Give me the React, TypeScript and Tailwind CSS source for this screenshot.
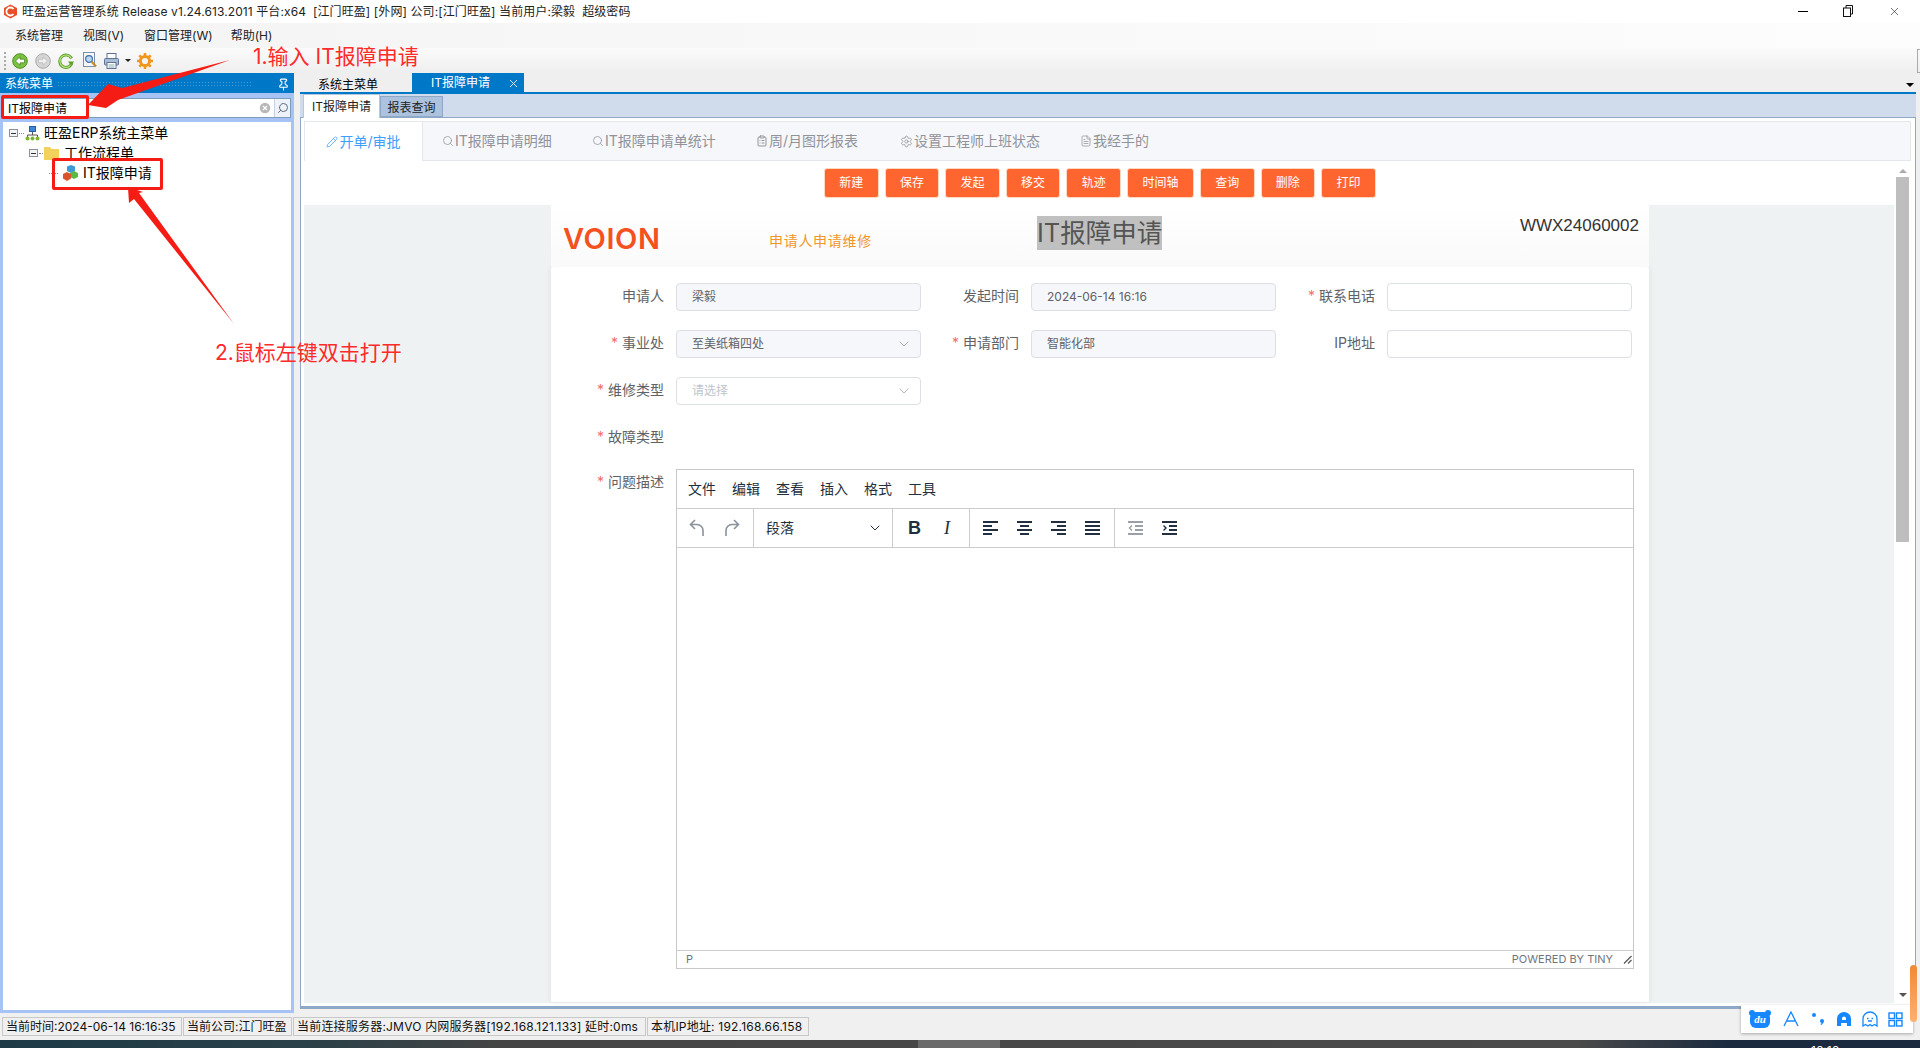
import { ChevronDown, CircleX, ClipboardList, FileText, Pencil, Pin, Search, Settings, X } from "lucide-react";
import type { ReactNode } from "react";

const CJK = "font-['Inter','Noto_Sans_CJK_SC',sans-serif]";

// toolbar icons of the old desktop shell
function RoundArrow({ grey, flip }: { grey?: boolean; flip?: boolean }) {
  return (
    <svg width="16" height="16" viewBox="0 0 16 16" className={flip ? "-scale-x-100" : ""}>
      <circle cx="8" cy="8" r="7.3" fill={grey ? "#d6d6d6" : "#7cc242"} stroke={grey ? "#a8a8a8" : "#4d8f22"} />
      <path d="M3.5 8 8 3.8V6.2h4.5v3.6H8v2.4z" fill={grey ? "#eeeeee" : "#ffffff"} stroke={grey ? "#b4b4b4" : "#3e7d1a"} strokeWidth="0.7" />
    </svg>
  );
}

function Refresh() {
  return (
    <svg width="16" height="16" viewBox="0 0 16 16">
      <path d="M13.5 5.500A6.200 6.200 0 1 0 14 9.500" fill="none" stroke="#5e9f2a" strokeWidth="3" />
      <path d="M13.5 5.500A6.200 6.200 0 1 0 14 9.500" fill="none" stroke="#b5e07f" strokeWidth="1.200" />
      <path d="M10 8.500h6l-3 4z" fill="#5e9f2a" />
    </svg>
  );
}

function Preview() {
  return (
    <svg width="15" height="17" viewBox="0 0 15 17">
      <rect x="0.5" y="0.5" width="11" height="14" fill="#f4f7fb" stroke="#7a8fb0" />
      <circle cx="6" cy="7" r="3.400" fill="#bcd7f5" stroke="#3f6fb0" strokeWidth="1.200" />
      <path d="m8.500 9.500 4.500 5" stroke="#c98a2b" strokeWidth="2.200" />
    </svg>
  );
}

function Printer() {
  return (
    <svg width="15" height="16" viewBox="0 0 15 16">
      <rect x="3" y="0.5" width="9" height="6" fill="#fff" stroke="#5d7396" />
      <rect x="0.5" y="5.500" width="14" height="6.500" rx="1" fill="#a9bcd6" stroke="#5d7396" />
      <rect x="3" y="9.500" width="9" height="6" fill="#fff" stroke="#5d7396" />
      <path d="M4.500 12h6M4.500 14h6" stroke="#8aa" />
    </svg>
  );
}

function Gear() {
  return (
    <svg width="16" height="16" viewBox="0 0 16 16">
      <circle cx="8" cy="8" r="4.600" fill="none" stroke="#f0971c" strokeWidth="3" />
      <path d="M8 0v3M8 13v3M0 8h3M13 8h3M2.300 2.300l2.200 2.200M11.500 11.500l2.200 2.200M13.700 2.300l-2.200 2.200M4.500 11.500l-2.200 2.200" stroke="#f0971c" strokeWidth="2.600" />
    </svg>
  );
}

function TreeBox() {
  return (
    <span className="flex h-[8px] w-[9px] shrink-0 items-center justify-center border border-[#8a9098] bg-[#f4f4f4]">
      <span className="h-px w-[5px] bg-[#30343a]" />
    </span>
  );
}

function OrgIcon() {
  return (
    <svg width="15" height="15" viewBox="0 0 15 15">
      <rect x="4.500" y="0.5" width="6" height="5" fill="#3f86d8" stroke="#2a5fa8" />
      <path d="M7.500 6v3M2.500 11V9h10v2" fill="none" stroke="#555" />
      <circle cx="2.500" cy="12.500" r="2" fill="#7fb52e" />
      <circle cx="7.500" cy="12.500" r="2" fill="#7fb52e" />
      <circle cx="12.500" cy="12.500" r="2" fill="#7fb52e" />
    </svg>
  );
}

function FolderIcon() {
  return (
    <svg width="15" height="14" viewBox="0 0 15 14">
      <path d="M0 1h6l1.500 2H15v11H0z" fill="#f2d25c" />
    </svg>
  );
}

function CubesIcon() {
  return (
    <svg width="16" height="16" viewBox="0 0 16 16">
      <path d="M5 1.500 9 0l4 1.500V6L9 8 5 6z" fill="#3c9bd6" />
      <path d="M8 8l4-2 4 2v4l-4 2-4-2z" fill="#58b947" />
      <path d="M1 9l4-2 4 2v4.500L5 16l-4-2.500z" fill="#d9552b" />
    </svg>
  );
}

function Field({ label, required, width }: { label: string; required?: boolean; width: string }) {
  return (
    <label className={`${width} shrink-0 pr-3 text-right text-sm leading-[26px] text-[#606266]`}>
      {required && <span className="mr-1 text-[#f56c6c]">*</span>}
      {label}
    </label>
  );
}

function Input({ value, disabled, placeholder, select }: { value?: string; disabled?: boolean; placeholder?: boolean; select?: boolean }) {
  return (
    <div
      className={`flex h-7 w-[245px] shrink-0 items-center justify-between rounded-[4px] border border-[#dcdfe6] pl-[15px] pr-[8px] text-xs ${disabled ? "bg-[#f5f7fa] text-[#606266]" : "bg-white"} ${placeholder ? "text-[#c0c4cc]" : ""}`}
    >
      <span>{value}</span>
      {select && <ChevronDown size={16} strokeWidth={1} className="text-[#909399]" />}
    </div>
  );
}

function EditorBars({ kind }: { kind: "left" | "center" | "right" | "justify" }) {
  const d = {
    left: "M0 1h15M0 5h9M0 9h15M0 13h9",
    center: "M0 1h15M3 5h9M0 9h15M3 13h9",
    right: "M0 1h15M6 5h9M0 9h15M6 13h9",
    justify: "M0 1h15M0 5h15M0 9h15M0 13h15",
  }[kind];
  return (
    <svg width="15" height="14" viewBox="0 0 15 14">
      <path d={d} stroke="#222f3e" strokeWidth="2" />
    </svg>
  );
}

const tabs: { label: string; w: string; icon: ReactNode }[] = [
  { label: "IT报障申请明细", w: "w-[110px]", icon: <Search size={12} strokeWidth={1.5} /> },
  { label: "IT报障申请单统计", w: "w-[124px]", icon: <Search size={12} strokeWidth={1.5} /> },
  { label: "周/月图形报表", w: "w-[104px]", icon: <ClipboardList size={12} strokeWidth={2} /> },
  { label: "设置工程师上班状态", w: "w-[140px]", icon: <Settings size={13} strokeWidth={1.5} /> },
  { label: "我经手的", w: "w-[70px]", icon: <FileText size={12} strokeWidth={1.5} /> },
];

const buttons = ["新建", "保存", "发起", "移交", "轨迹", "时间轴", "查询", "删除", "打印"];

export default function App() {
  return (
    <div className={`relative flex h-[1048px] w-[1920px] flex-col overflow-hidden bg-[#f0f0f0] ${CJK}`}>
      {/* 标题栏 */}
      <div className="flex h-[23px] shrink-0 items-center bg-white pl-[3px] pr-[19px]">
        <svg width="15" height="15" viewBox="0 0 15 15">
          <path d="M7.500 0.5 14 4v7l-6.500 3.500L1 11V4z" fill="#e8502a" />
          <path d="M10.500 5a4 4 0 1 0 0 5" fill="none" stroke="#fff" strokeWidth="1.800" />
        </svg>
        <span className="ml-1 whitespace-pre text-xs tracking-[0.1px] text-[#222]">
          旺盈运营管理系统 Release v1.24.613.2011 平台:x64  [江门旺盈] [外网] 公司:[江门旺盈] 当前用户:梁毅  超级密码
        </span>
        <div className="ml-auto flex items-center gap-[35px]">
          <span className="h-px w-[10px] bg-black" />
          <svg width="10" height="12" viewBox="0 0 10 12" className="-mt-[2px]">
            <rect x="0.5" y="3" width="7" height="8.500" fill="#fff" stroke="#111" />
            <path d="M3 3V0.5h6.500V9H8" fill="none" stroke="#111" />
          </svg>
          <X size={13} strokeWidth={1} className="text-black" />
        </div>
      </div>

      {/* 菜单栏 */}
      <div className="flex h-[25px] shrink-0 items-center bg-gradient-to-r from-[#f4f4f4] to-[#fdfdfd] pl-[15px] text-xs text-[#222]">
        <span>系统管理</span>
        <span className="ml-5">视图(V)</span>
        <span className="ml-5">窗口管理(W)</span>
        <span className="ml-[18px]">帮助(H)</span>
      </div>

      {/* 工具栏 */}
      <div className="flex h-[25px] shrink-0 items-center bg-gradient-to-b from-[#fbfbfb] to-[#eeeeee] pl-[4px]">
        <span className="mr-[6px] h-[18px] w-[2px] border-l-2 border-dotted border-[#aaa]" />
        <RoundArrow />
        <span className="ml-[7px]"><RoundArrow grey flip /></span>
        <span className="ml-[7px]"><Refresh /></span>
        <span className="ml-[9px]"><Preview /></span>
        <span className="ml-[6px]"><Printer /></span>
        <span className="ml-[6px] h-0 w-0 border-x-[3px] border-t-[3px] border-x-transparent border-t-[#222]" />
        <span className="ml-[6px]"><Gear /></span>
        <span className="ml-auto h-[24px] w-[3px] border-y border-l border-[#aaaaaa]" />
      </div>

      <div className="flex min-h-0 flex-1">
        {/* 左侧系统菜单 */}
        <aside className="flex h-[940px] w-[294px] shrink-0 flex-col">
          <div className="flex h-5 shrink-0 items-center bg-[#0078c8] pl-[5px] pr-[4px] pt-[2px] text-xs text-white">
            <span>系统菜单</span>
            <span className="ml-1 h-[6px] flex-1 bg-[radial-gradient(#4a9bd8_1px,transparent_1px)] bg-[length:3px_3px]" />
            <Pin size={13} className="ml-[25px] text-white" />
          </div>
          <div className="flex min-h-0 flex-1 flex-col border-x-[3px] border-b-[3px] border-[#a6c3f5] bg-white">
            <div className="-mx-[3px] flex h-[29px] shrink-0 items-start bg-[#a6c3f5] px-[3px] pt-[5px]">
              <div className="flex h-[20px] flex-1 items-center justify-between border border-[#7f9db9] bg-white pl-[4px]">
                <span className="pt-[2px] text-xs text-black">IT报障申请</span>
                <div className="flex h-full items-center">
                  <CircleX size={14} className="mr-[2px] fill-[#b8b8b8] text-white" />
                  <span className="flex h-full w-[16px] items-center justify-center border-l border-[#c6d3e6] bg-[#eef3fa]">
                    <Search size={12} className="-scale-x-100 text-[#5a6b80]" />
                  </span>
                </div>
              </div>
            </div>
            <div className="flex flex-col pt-[1px] text-sm leading-[20px] text-black">
              <div className="flex h-[20px] items-center pl-[6px]">
                <TreeBox />
                <span className="ml-[1px] w-[5px] border-t border-dotted border-[#888]" />
                <span className="ml-[1px]"><OrgIcon /></span>
                <span className="ml-[4px]">旺盈ERP系统主菜单</span>
              </div>
              <div className="flex h-[20px] items-center pl-[26px]">
                <TreeBox />
                <span className="ml-[1px] w-[4px] border-t border-dotted border-[#888]" />
                <span className="ml-[1px]"><FolderIcon /></span>
                <span className="ml-[5px]">工作流程单</span>
              </div>
              <div className="flex h-[20px] items-center pl-[46px]">
                <span className="w-[9px] border-t border-dotted border-[#888]" />
                <span className="ml-[4px]"><CubesIcon /></span>
                <span className="ml-[5px]">IT报障申请</span>
              </div>
            </div>
          </div>
        </aside>

        {/* 右侧工作区 */}
        <main className="ml-[6px] flex h-[936px] min-w-0 flex-1 flex-col pr-[4px]">
          <div className="relative flex h-[19px] shrink-0 bg-[#efefef] text-xs">
            <span className="ml-[18px] w-[94px] pt-[2px] leading-[19px] text-black">系统主菜单</span>
            <div className="flex w-[112px] items-center bg-[#0078c8] pl-[19px] pt-[1px] text-white">
              <span>IT报障申请</span>
              <X size={13} strokeWidth={1.5} className="ml-[17px]" />
            </div>
            <span className="absolute right-[2px] top-[10px] h-0 w-0 border-x-[4px] border-t-[4px] border-x-transparent border-t-black" />
          </div>
          <div className="h-[2px] shrink-0 bg-[#0078c8]" />
          <div className="flex h-[24px] shrink-0 items-end border-b border-[#8ea8c8] bg-[#d0dcec] pl-[3px] text-xs">
            <span className="relative z-10 -mb-px flex h-[24px] w-[77px] items-center justify-center border border-b-0 border-[#b8c8dc] bg-white pt-[1px] text-[#222]">IT报障申请</span>
            <span className="flex h-[21px] w-[63px] items-center justify-center border border-[#8ea8c8] bg-[#adc2dd] pt-[2px] text-[#222]">报表查询</span>
          </div>

          <div className="flex min-h-0 flex-1 flex-col border-x border-b-[3px] border-[#8ea8c8] bg-white p-[3px] pr-[4px]">
            {/* 页签 */}
            <div className="flex h-[40px] shrink-0 border border-[#e4e7ed] bg-[#f5f7fa] text-sm text-[#909399]">
              <div className="-mb-px flex w-[118px] items-center justify-center gap-[1px] border-r border-[#e4e7ed] bg-white text-[#409eff]">
                <Pencil size={12} strokeWidth={1.5} />
                <span>开单/审批</span>
              </div>
              <div className="ml-[19px] flex items-center gap-10">
                {tabs.map((t) => (
                  <span key={t.label} className={`${t.w} flex items-center gap-[1px] whitespace-nowrap`}>
                    {t.icon}
                    {t.label}
                  </span>
                ))}
              </div>
            </div>

            <div className="flex min-h-0 flex-1">
              <div className="flex min-w-0 flex-1 flex-col">
                {/* 操作按钮 */}
                <div className="flex h-[44px] shrink-0 items-start gap-[6px] bg-white pl-[520px] pt-[7px]">
                  {buttons.map((b) => (
                    <button
                      key={b}
                      className={`h-[30px] ${b === "时间轴" ? "w-[67px]" : "w-[54.6px]"} rounded-[3px] border border-[#ffd8c0] bg-[#ff652f] text-xs text-white`}
                    >
                      {b}
                    </button>
                  ))}
                </div>

                <div className="flex min-h-0 flex-1 bg-[#eff2f3] pb-[1px] pl-[247px]">
                  <div className="flex h-full w-[1098px] flex-col">
                    {/* 表头 */}
                    <div className="relative flex h-[62px] shrink-0 items-start bg-gradient-to-b from-white to-[#fafafa]">
                      <span className="ml-[12px] mt-[19px] font-['Inter',sans-serif] text-[29px] font-semibold leading-[30px] tracking-[0.6px] text-[#f4511e]">VOION</span>
                      <span className="absolute left-[218px] top-[26px] text-sm tracking-[0.7px] text-[#f0962a]">申请人申请维修</span>
                      <span className="absolute left-[486px] top-[11px] bg-[#c0c0c0] text-[25.5px] leading-[34px] text-[#555]">IT报障申请</span>
                      <span className="absolute right-[10px] top-[9px] font-['Liberation_Sans',sans-serif] text-[17px] leading-[24px] text-[#333]">WWX24060002</span>
                    </div>

                    {/* 表单 */}
                    <div className="flex min-h-0 flex-1 flex-col rounded-t-[2px] bg-white pt-[16px] shadow-[0_0_6px_rgba(0,0,0,0.08)]">
                      <div className="flex">
                        <Field label="申请人" width="w-[125px]" />
                        <Input value="梁毅" disabled />
                        <Field label="发起时间" width="w-[110px]" />
                        <Input value="2024-06-14 16:16" disabled />
                        <Field label="联系电话" required width="w-[111px]" />
                        <Input />
                      </div>
                      <div className="mt-[19px] flex">
                        <Field label="事业处" required width="w-[125px]" />
                        <Input value="至美纸箱四处" disabled select />
                        <Field label="申请部门" required width="w-[110px]" />
                        <Input value="智能化部" disabled />
                        <Field label="IP地址" width="w-[111px]" />
                        <Input />
                      </div>
                      <div className="mt-[19px] flex">
                        <Field label="维修类型" required width="w-[125px]" />
                        <Input value="请选择" placeholder select />
                      </div>
                      <div className="mt-[19px] flex h-[28px]">
                        <Field label="故障类型" required width="w-[125px]" />
                      </div>
                      <div className="mt-[17px] flex min-h-0 flex-1 pb-[33px]">
                        <Field label="问题描述" required width="w-[125px]" />
                        {/* 富文本编辑器 */}
                        <div className="flex w-[958px] flex-col border border-[#c8c8c8] bg-white text-[#222f3e]">
                          <div className="flex h-[39px] shrink-0 items-center gap-4 border-b border-[#cccccc] pl-[11px] text-sm">
                            <span>文件</span><span>编辑</span><span>查看</span><span>插入</span><span>格式</span><span>工具</span>
                          </div>
                          <div className="flex h-[39px] shrink-0 items-center border-b border-[#cccccc]">
                            <div className="flex h-full w-[77px] items-center gap-[19px] border-r border-[#cccccc] pl-[12px]">
                              <svg width="16" height="20" viewBox="0 0 16 20" fill="none" stroke="#8a929c" strokeWidth="1.600"><path d="M6 2 1.500 6.500 6 11M2 6.500h6a6 6 0 0 1 6 6V18" /></svg>
                              <svg width="16" height="20" viewBox="0 0 16 20" fill="none" stroke="#8a929c" strokeWidth="1.600"><path d="M10 2l4.500 4.500L10 11M14 6.500H8a6 6 0 0 0-6 6V18" /></svg>
                            </div>
                            <div className="flex h-full w-[139px] items-center justify-between border-r border-[#cccccc] pl-[12px] pr-[9px] text-sm">
                              <span>段落</span>
                              <ChevronDown size={16} strokeWidth={1.5} />
                            </div>
                            <div className="flex h-full w-[77px] items-center border-r border-[#cccccc] pl-[15px]">
                              <span className="w-[36px] font-['Liberation_Sans',sans-serif] text-lg font-bold">B</span>
                              <span className="font-['Liberation_Serif',serif] text-lg italic">I</span>
                            </div>
                            <div className="flex h-full w-[145px] items-center gap-[19px] border-r border-[#cccccc] pl-[13px]">
                              <EditorBars kind="left" />
                              <EditorBars kind="center" />
                              <EditorBars kind="right" />
                              <EditorBars kind="justify" />
                            </div>
                            <div className="flex items-center gap-[19px] pl-[13px]">
                              <svg width="15" height="14" viewBox="0 0 15 14" fill="none" stroke="#9aa0a8" strokeWidth="2"><path d="M0 1h15M7 5h8M7 9h8M0 13h15" /><path d="M4 4.500 1.500 7 4 9.500" strokeWidth="1.400" /></svg>
                              <svg width="15" height="14" viewBox="0 0 15 14" fill="none" stroke="#222f3e" strokeWidth="2"><path d="M0 1h15M7 5h8M7 9h8M0 13h15" /><path d="M1.500 4.500 4 7 1.500 9.500" strokeWidth="1.400" /></svg>
                            </div>
                          </div>
                          <div className="min-h-0 flex-1" />
                          <div className="flex h-[18px] shrink-0 items-center justify-between border-t border-[#cccccc] pl-[9px] pr-[1px] text-[11px] leading-none text-[#70757c]">
                            <span>P</span>
                            <div className="flex items-center gap-[10px]">
                              <span>POWERED BY TINY</span>
                              <svg width="9" height="9" viewBox="0 0 9 9" stroke="#555" strokeWidth="1.200"><path d="M1 8.500 8.500 1M5 8.500 8.500 5" /></svg>
                            </div>
                          </div>
                        </div>
                      </div>
                    </div>
                  </div>
                </div>
              </div>

              {/* 滚动条 */}
              <div className="flex w-[17px] shrink-0 flex-col items-center bg-white pb-[6px] pt-[8px]">
                <span className="h-0 w-0 border-x-[4px] border-b-[4px] border-x-transparent border-b-[#aaa]" />
                <span className="mt-[4px] h-[365px] w-[13px] bg-[#bebebe]" />
                <span className="mt-auto h-0 w-0 border-x-[4px] border-t-[4px] border-x-transparent border-t-[#555]" />
              </div>
            </div>
          </div>
        </main>
      </div>

      {/* 状态栏 */}
      <div className="flex h-[23px] shrink-0 items-start gap-[1px] bg-[#f0f0f0] pl-[2px] text-xs text-[#111]">
        <span className="flex h-[19px] w-[180px] items-center border border-[#c8c8c8] pl-[3px]">当前时间:2024-06-14 16:16:35</span>
        <span className="flex h-[19px] w-[109px] items-center border border-[#c8c8c8] pl-[3px]">当前公司:江门旺盈</span>
        <span className="flex h-[19px] w-[353px] items-center whitespace-nowrap border border-[#c8c8c8] pl-[3px] tracking-[0.2px]">当前连接服务器:JMVO 内网服务器[192.168.121.133] 延时:0ms</span>
        <span className="flex h-[19px] w-[162px] items-center whitespace-nowrap border border-[#c8c8c8] pl-[3px] tracking-[0.2px]">本机IP地址: 192.168.66.158</span>
      </div>

      {/* 任务栏 */}
      <div className="relative h-[8px] shrink-0 overflow-hidden bg-[linear-gradient(to_right,#1d3a46_0%,#2a4048_16%,#444444_26%,#4a4a4a_82%,#1b2a3f_90%,#1b2a3f_100%)]">
        <span className="absolute left-[918px] top-0 h-full w-[82px] bg-[#6a6a6a]" />
        <span className="absolute left-[1811px] top-[5px] text-xs leading-none text-white">16:16</span>
      </div>

      {/* 输入法工具条 */}
      <div className="absolute left-[1741px] top-[1005px] flex h-[28px] w-[172px] items-center bg-white pl-[8px] shadow-[0_1px_3px_rgba(0,0,0,0.3)]">
        <span className="relative flex h-[18px] w-[22px] items-center justify-center">
          <svg className="absolute inset-0" width="22" height="18" viewBox="0 0 22 18">
            <circle cx="3" cy="3" r="3" fill="#1787ff" />
            <circle cx="19" cy="3" r="3" fill="#1787ff" />
            <rect x="1" y="2" width="20" height="16" rx="6" fill="#1787ff" />
          </svg>
          <span className="relative font-['Liberation_Serif',serif] text-[11px] font-bold italic leading-none text-white">du</span>
        </span>
        <svg className="ml-[12px]" width="16" height="16" viewBox="0 0 16 16" fill="none" stroke="#1787ff" strokeWidth="1.300"><path d="M1 15 8 1l7 14M4 10h8" /></svg>
        <svg className="ml-[11px]" width="16" height="16" viewBox="0 0 16 16" fill="#1787ff"><circle cx="4" cy="4" r="2" /><circle cx="12" cy="10" r="2" /><path d="M13.500 10c0 2-1 3.500-2.500 4l-.5-1c1-.5 1.500-1 1.500-2z" /></svg>
        <svg className="ml-[10px]" width="16" height="16" viewBox="0 0 16 16" fill="#1787ff"><path fillRule="evenodd" d="M1 15V8a7 7 0 0 1 14 0v7h-4v-3H5v3zM6 9h4V7.500a2 2 0 0 0-4 0z" /></svg>
        <svg className="ml-[10px]" width="16" height="16" viewBox="0 0 16 16" fill="none" stroke="#1787ff" strokeWidth="1.300"><path d="M1 15V8a7 7 0 0 1 14 0v7l-2.500-1.500L10 15l-2-1.500L6 15l-2.500-1.500z" /><path d="M5 7.500h1.500M9.500 7.500H11M6 10h4" /></svg>
        <svg className="ml-[10px]" width="15" height="15" viewBox="0 0 15 15" fill="none" stroke="#1787ff" strokeWidth="1.400"><rect x="1" y="1" width="5.500" height="5.500" /><rect x="8.500" y="1" width="5.500" height="5.500" /><rect x="1" y="8.500" width="5.500" height="5.500" /><rect x="8.500" y="8.500" width="5.500" height="5.500" /></svg>
      </div>
      <span className="absolute left-[1910px] top-[965px] h-[57px] w-[7px] rounded-full bg-gradient-to-b from-[#f08a30] to-[#ffb070]" />

      {/* 教程标注 */}
      <span className="absolute left-[253px] top-[43px] text-[21px] leading-[28px] text-[#ff2a2a]">1.输入 IT报障申请</span>
      <span className="absolute left-[215px] top-[339px] text-[21px] leading-[28px] text-[#ff2a2a]">2.鼠标左键双击打开</span>
      <span className="absolute left-[1px] top-[95px] h-[24px] w-[88px] rounded-[2px] border-[3px] border-[#f41c14]" />
      <span className="absolute left-[52px] top-[158px] h-[32px] w-[111px] rounded-[2px] border-[3px] border-[#f41c14]" />
      <svg className="pointer-events-none absolute left-0 top-0" width="300" height="340" viewBox="0 0 300 340">
        <polygon points="88,105 108,84 122,88 230,60 118,100 106,108" fill="#f41c14" />
        <polygon points="128,187 143,192 139,193 234,324 134,199 129,203" fill="#f41c14" />
      </svg>
    </div>
  );
}
